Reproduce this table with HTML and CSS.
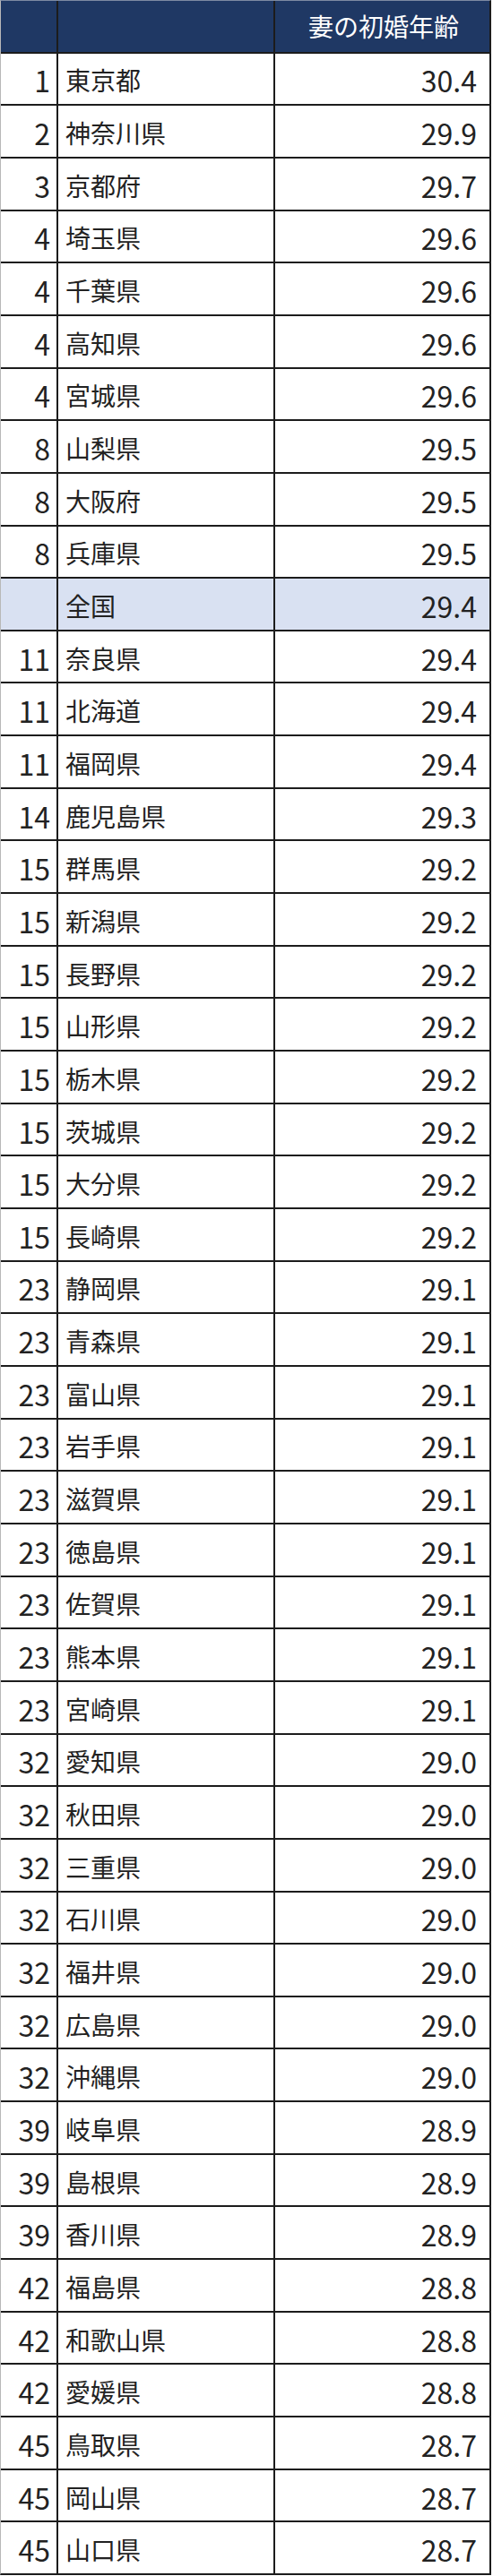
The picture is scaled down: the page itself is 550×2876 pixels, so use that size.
FILE: index.html
```html
<!DOCTYPE html>
<html lang="ja">
<head>
<meta charset="utf-8">
<title>妻の初婚年齢</title>
<link rel="stylesheet" href="styles.css">
</head>
<body>
<div class="table">
  <div class="row head"><div class="cell rank"></div><div class="cell name"></div><div class="cell value">妻の初婚年齢</div></div>
  <div class="row"><div class="cell rank">1</div><div class="cell name">東京都</div><div class="cell value">30.4</div></div>
  <div class="row"><div class="cell rank">2</div><div class="cell name">神奈川県</div><div class="cell value">29.9</div></div>
  <div class="row"><div class="cell rank">3</div><div class="cell name">京都府</div><div class="cell value">29.7</div></div>
  <div class="row"><div class="cell rank">4</div><div class="cell name">埼玉県</div><div class="cell value">29.6</div></div>
  <div class="row"><div class="cell rank">4</div><div class="cell name">千葉県</div><div class="cell value">29.6</div></div>
  <div class="row"><div class="cell rank">4</div><div class="cell name">高知県</div><div class="cell value">29.6</div></div>
  <div class="row"><div class="cell rank">4</div><div class="cell name">宮城県</div><div class="cell value">29.6</div></div>
  <div class="row"><div class="cell rank">8</div><div class="cell name">山梨県</div><div class="cell value">29.5</div></div>
  <div class="row"><div class="cell rank">8</div><div class="cell name">大阪府</div><div class="cell value">29.5</div></div>
  <div class="row"><div class="cell rank">8</div><div class="cell name">兵庫県</div><div class="cell value">29.5</div></div>
  <div class="row total"><div class="cell rank"></div><div class="cell name">全国</div><div class="cell value">29.4</div></div>
  <div class="row"><div class="cell rank">11</div><div class="cell name">奈良県</div><div class="cell value">29.4</div></div>
  <div class="row"><div class="cell rank">11</div><div class="cell name">北海道</div><div class="cell value">29.4</div></div>
  <div class="row"><div class="cell rank">11</div><div class="cell name">福岡県</div><div class="cell value">29.4</div></div>
  <div class="row"><div class="cell rank">14</div><div class="cell name">鹿児島県</div><div class="cell value">29.3</div></div>
  <div class="row"><div class="cell rank">15</div><div class="cell name">群馬県</div><div class="cell value">29.2</div></div>
  <div class="row"><div class="cell rank">15</div><div class="cell name">新潟県</div><div class="cell value">29.2</div></div>
  <div class="row"><div class="cell rank">15</div><div class="cell name">長野県</div><div class="cell value">29.2</div></div>
  <div class="row"><div class="cell rank">15</div><div class="cell name">山形県</div><div class="cell value">29.2</div></div>
  <div class="row"><div class="cell rank">15</div><div class="cell name">栃木県</div><div class="cell value">29.2</div></div>
  <div class="row"><div class="cell rank">15</div><div class="cell name">茨城県</div><div class="cell value">29.2</div></div>
  <div class="row"><div class="cell rank">15</div><div class="cell name">大分県</div><div class="cell value">29.2</div></div>
  <div class="row"><div class="cell rank">15</div><div class="cell name">長崎県</div><div class="cell value">29.2</div></div>
  <div class="row"><div class="cell rank">23</div><div class="cell name">静岡県</div><div class="cell value">29.1</div></div>
  <div class="row"><div class="cell rank">23</div><div class="cell name">青森県</div><div class="cell value">29.1</div></div>
  <div class="row"><div class="cell rank">23</div><div class="cell name">富山県</div><div class="cell value">29.1</div></div>
  <div class="row"><div class="cell rank">23</div><div class="cell name">岩手県</div><div class="cell value">29.1</div></div>
  <div class="row"><div class="cell rank">23</div><div class="cell name">滋賀県</div><div class="cell value">29.1</div></div>
  <div class="row"><div class="cell rank">23</div><div class="cell name">徳島県</div><div class="cell value">29.1</div></div>
  <div class="row"><div class="cell rank">23</div><div class="cell name">佐賀県</div><div class="cell value">29.1</div></div>
  <div class="row"><div class="cell rank">23</div><div class="cell name">熊本県</div><div class="cell value">29.1</div></div>
  <div class="row"><div class="cell rank">23</div><div class="cell name">宮崎県</div><div class="cell value">29.1</div></div>
  <div class="row"><div class="cell rank">32</div><div class="cell name">愛知県</div><div class="cell value">29.0</div></div>
  <div class="row"><div class="cell rank">32</div><div class="cell name">秋田県</div><div class="cell value">29.0</div></div>
  <div class="row"><div class="cell rank">32</div><div class="cell name">三重県</div><div class="cell value">29.0</div></div>
  <div class="row"><div class="cell rank">32</div><div class="cell name">石川県</div><div class="cell value">29.0</div></div>
  <div class="row"><div class="cell rank">32</div><div class="cell name">福井県</div><div class="cell value">29.0</div></div>
  <div class="row"><div class="cell rank">32</div><div class="cell name">広島県</div><div class="cell value">29.0</div></div>
  <div class="row"><div class="cell rank">32</div><div class="cell name">沖縄県</div><div class="cell value">29.0</div></div>
  <div class="row"><div class="cell rank">39</div><div class="cell name">岐阜県</div><div class="cell value">28.9</div></div>
  <div class="row"><div class="cell rank">39</div><div class="cell name">島根県</div><div class="cell value">28.9</div></div>
  <div class="row"><div class="cell rank">39</div><div class="cell name">香川県</div><div class="cell value">28.9</div></div>
  <div class="row"><div class="cell rank">42</div><div class="cell name">福島県</div><div class="cell value">28.8</div></div>
  <div class="row"><div class="cell rank">42</div><div class="cell name">和歌山県</div><div class="cell value">28.8</div></div>
  <div class="row"><div class="cell rank">42</div><div class="cell name">愛媛県</div><div class="cell value">28.8</div></div>
  <div class="row"><div class="cell rank">45</div><div class="cell name">鳥取県</div><div class="cell value">28.7</div></div>
  <div class="row"><div class="cell rank">45</div><div class="cell name">岡山県</div><div class="cell value">28.7</div></div>
  <div class="row"><div class="cell rank">45</div><div class="cell name">山口県</div><div class="cell value">28.7</div></div>
</div>
</body>
</html>
```
FILE: styles.css
```css
html, body {
  margin: 0;
  padding: 0;
  background: #ffffff;
}

body {
  font-family: "Noto Sans CJK JP", "Noto Sans", sans-serif;
  color: #222222;
}

.table {
  box-sizing: border-box;
  width: 548px;
  height: 2875px;
  display: grid;
  grid-template-columns: 62px 240px 1fr;
  grid-template-rows: repeat(49, 1fr);
  gap: 2px;
  background: #1c1c1c;
  border-top: 1px solid #7d8aa3;
  border-left: 1px solid #b8b8b8;
  border-right: 2px solid #1c1c1c;
  border-bottom: 2px solid #1c1c1c;
}

.row {
  display: contents;
}

.cell {
  background: #ffffff;
  display: flex;
  align-items: center;
  padding-top: 3px;
  box-sizing: border-box;
  white-space: nowrap;
  overflow: hidden;
}

.rank {
  justify-content: flex-end;
  padding-right: 7px;
  font-size: 32px;
}

.name {
  justify-content: flex-start;
  padding-left: 8px;
  font-size: 28px;
}

.value {
  justify-content: flex-end;
  padding-right: 14px;
  font-size: 32px;
}

.head .cell {
  background: #1f3864;
  color: #ffffff;
}

.head .value {
  font-size: 28px;
  padding-right: 34px;
  padding-top: 0;
}

.total .cell {
  background: #d9e1f2;
}
```
